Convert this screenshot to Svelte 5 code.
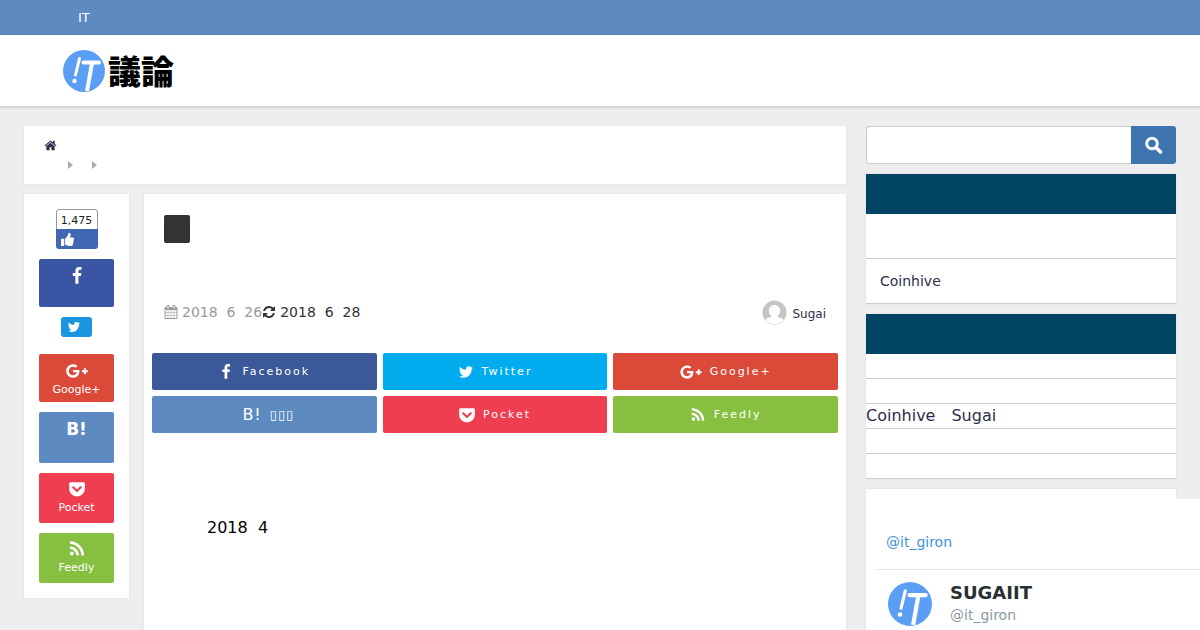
<script lang="ts">
	type Icon = { box: string; d: string };

	const icons: Record<string, Icon> = {
		facebook: {
			box: '0 0 1792 1792',
			d: 'M1343 12v264h-157q-86 0-116 36t-30 108v189h293l-39 296h-254v759h-306v-759h-255v-296h255v-218q0-186 104-288.500t277-102.500q147 0 228 12z'
		},
		twitter: {
			box: '0 0 1792 1792',
			d: 'M1684 408q-67 98-162 167 1 14 1 42 0 130-38 259.500t-115.500 248.500-184.500 210.500-258 146-323 54.500q-271 0-496-145 35 4 78 4 225 0 401-138-105-2-188-64.500t-114-159.500q33 5 61 5 43 0 85-11-112-23-185.500-111.500t-73.500-205.500v-4q68 38 146 41-66-44-105-115t-39-154q0-88 44-163 121 149 294.500 238.500t371.500 99.500q-8-38-8-74 0-134 94.500-228.500t228.500-94.500q140 0 236 102 109-21 205-78-37 115-142 178 93-10 186-50z'
		},
		google: {
			box: '0 0 640 512',
			d: 'M386.061 228.496c1.834 9.692 3.143 19.384 3.143 31.956C389.204 370.205 315.599 448 204.800 448c-106.084 0-192-85.915-192-192s85.916-192 192-192c51.864 0 95.083 18.859 128.611 50.292l-52.126 50.030c-14.145-13.621-39.028-29.599-76.485-29.599-65.484 0-118.920 54.221-118.920 121.277 0 67.056 53.436 121.277 118.920 121.277 75.961 0 104.513-54.745 108.965-82.773H204.800v-66.009h181.261zm185.406 6.437V179.200h-56.001v55.733h-55.733v56.001h55.733v55.733h56.001v-55.733H627.200v-56.001h-55.733z'
		},
		pocket: {
			box: '0 0 448 512',
			d: 'M407.600 64h-367C18.500 64 0 82.500 0 104.600v135.200C0 364.500 99.700 464 224.200 464c124 0 223.800-99.500 223.800-224.200V104.600c0-22.400-17.700-40.600-40.400-40.600zm-162 268.500c-12.400 11.800-31.400 11.100-42.400 0C89.500 223.600 88.300 227.400 88.300 209.300c0-16.900 13.800-30.700 30.700-30.700 17 0 16.100 3.800 105.200 89.300 90.600-86.900 88.600-89.300 105.500-89.300 16.900 0 30.700 13.800 30.700 30.700 0 17.800-2.900 15.700-114.800 123.200z'
		},
		feedly: {
			box: '0 0 1792 1792',
			d: 'M576 1344q0 80-56 136t-136 56-136-56-56-136 56-136 136-56 136 56 56 136zm512 123q2 28-17 48-18 21-47 21h-135q-25 0-43-16.500t-20-41.500q-22-229-184.500-391.500t-391.500-184.500q-25-2-41.500-20t-16.500-43v-135q0-29 21-47 17-17 43-17h5q160 13 306 80.500t259 181.500q114 113 181.500 259t80.500 306zm512 2q2 27-18 47-18 20-46 20h-143q-26 0-44.500-17.500t-19.500-42.500q-12-215-101-408.500t-231.500-336-336-231.500-408.500-102q-25-1-42.500-19.500t-17.500-43.500v-143q0-28 20-46 18-18 44-18h3q262 13 501.500 120t425.500 294q187 186 294 425.500t120 501.500z'
		},
		home: {
			box: '0 0 1792 1792',
			d: 'M1472 992v480q0 26-19 45t-45 19h-384v-384h-256v384h-384q-26 0-45-19t-19-45v-480q0-1 .5-3t.5-3l575-474 575 474q1 2 1 6zm223-69l-62 74q-8 9-21 11h-3q-13 0-21-7l-692-577-692 577q-12 8-24 7-13-2-21-11l-62-74q-8-10-7-23.500t11-21.500l719-599q32-26 76-26t76 26l244 204v-195q0-14 9-23t23-9h192q14 0 23 9t9 23v408l219 182q10 8 11 21.500t-7 23.500z'
		},
		refresh: {
			box: '0 0 1792 1792',
			d: 'M1639 1056q0 5-1 7-64 268-268 434.500t-478 166.500q-146 0-282.500-55t-243.500-157l-129 129q-19 19-45 19t-45-19-19-45v-448q0-26 19-45t45-19h448q26 0 45 19t19 45-19 45l-137 137q71 66 161 102t187 36q134 0 250-65t186-179q11-17 53-117 8-23 30-23h192q13 0 22.500 9.500t9.500 22.500zm25-800v448q0 26-19 45t-45 19h-448q-26 0-45-19t-19-45 19-45l138-138q-148-137-349-137-134 0-250 65t-186 179q-11 17-53 117-8 23-30 23h-199q-13 0-22.500-9.500t-9.500-22.500v-7q65-268 270-434.500t480-166.500q146 0 284 55.500t245 156.500l130-129q19-19 45-19t45 19 19 45z'
		},
		calendar: {
			box: '0 0 1792 1792',
			d: 'M192 1664h288v-288h-288v288zm352 0h320v-288h-320v288zm-352-352h288v-320h-288v320zm352 0h320v-320h-320v320zm-352-384h288v-288h-288v288zm736 736h320v-288h-320v288zm-384-736h320v-288h-320v288zm768 736h288v-288h-288v288zm-384-352h320v-320h-320v320zm-352-864v-288q0-13-9.500-22.500t-22.500-9.500h-64q-13 0-22.500 9.500t-9.500 22.500v288q0 13 9.500 22.500t22.500 9.500h64q13 0 22.500-9.500t9.500-22.500zm736 864h288v-320h-288v320zm-384-384h320v-288h-320v288zm384 0h288v-288h-288v288zm32-480v-288q0-13-9.500-22.500t-22.500-9.500h-64q-13 0-22.500 9.500t-9.500 22.500v288q0 13 9.500 22.500t22.500 9.500h64q13 0 22.500-9.500t9.500-22.500zm384-64v1280q0 52-38 90t-90 38h-1408q-52 0-90-38t-38-90v-1280q0-52 38-90t90-38h128v-96q0-66 47-113t113-47h64q66 0 113 47t47 113v96h384v-96q0-66 47-113t113-47h64q66 0 113 47t47 113v96h128q52 0 90 38t38 90z'
		},
		thumb: {
			box: '0 0 512 512',
			d: 'M104 224H24c-13.255 0-24 10.745-24 24v240c0 13.255 10.745 24 24 24h80c13.255 0 24-10.745 24-24V248c0-13.255-10.745-24-24-24zM384 81.452c0 42.416-25.970 66.208-33.277 94.548h101.723c33.397 0 59.397 27.746 59.553 58.098.084 17.938-7.546 37.249-19.439 49.197l-.11.11c9.836 23.337 8.237 56.037-9.308 79.469 8.681 25.895-.069 57.704-16.382 74.757 4.298 17.598 2.244 32.575-6.148 44.632C440.202 511.587 389.616 512 346.839 512l-2.845-.001c-48.287-.017-87.806-17.598-119.560-31.725-15.957-7.099-36.821-15.887-52.651-16.178-6.540-.120-11.783-5.457-11.783-11.998v-213.770c0-3.200 1.282-6.271 3.558-8.521 39.614-39.144 56.648-80.587 89.117-113.111 14.804-14.832 20.188-37.236 25.393-58.902C282.515 39.293 291.817 0 312 0c24 0 72 8 72 81.452z'
		}
	};

	const shares = [
		{ id: 'facebook', label: 'Facebook' },
		{ id: 'twitter', label: 'Twitter' },
		{ id: 'google', label: 'Google+' },
		{ id: 'hatena', label: '▯▯▯' },
		{ id: 'pocket', label: 'Pocket' },
		{ id: 'feedly', label: 'Feedly' }
	];

	const posts = ['', 'Coinhive'];
	const comments = [[], [], ['Coinhive', 'Sugai'], [], []];

	let query = $state('');
</script>

{#snippet icon(name: string)}
	<svg class="icon {name}-icon" viewBox={icons[name].box} aria-hidden="true">
		<path d={icons[name].d} />
	</svg>
{/snippet}

{#snippet mark()}
	<svg class="mark" viewBox="0 0 42 42" aria-hidden="true">
		<circle cx="21" cy="21" r="21" fill="#5b9ff5" />
		<g fill="none" stroke="#fff" stroke-linecap="round">
			<path d="M16.500 8.500 12.500 25" stroke-width="3" />
			<path d="M20.500 12.500H36" stroke-width="4" />
			<path d="M29 13 24 41" stroke-width="4" stroke-linecap="butt" />
		</g>
		<circle cx="11.500" cy="31" r="2.200" fill="#fff" />
	</svg>
{/snippet}

<div class="topbar"><p>IT</p></div>

<header>
	<a class="logo" href="/" aria-label="IT議論">
		{@render mark()}
		<span>議論</span>
	</a>
</header>

<div class="page">
	<main>
		<nav class="card crumbs">
			<a href="/" aria-label="Home">{@render icon('home')}</a>
			<div class="arrows"><i></i><i></i></div>
		</nav>

		<div class="columns">
			<div class="card side-share">
				<a class="like" href="/like">
					<span>1,475</span>
					<b>{@render icon('thumb')}</b>
				</a>
				<a class="tile fb-share" href="/share/facebook" aria-label="Facebook">{@render icon('facebook')}</a>
				<div class="tweet-wrap">
					<a class="tweet" href="/share/twitter" aria-label="Twitter">{@render icon('twitter')}</a>
				</div>
				<a class="tile google" href="/share/google">{@render icon('google')}<span>Google+</span></a>
				<a class="tile tall hatena" href="/share/hatena"><strong>B!</strong></a>
				<a class="tile tall pocket" href="/share/pocket">{@render icon('pocket')}<span>Pocket</span></a>
				<a class="tile tall feedly" href="/share/feedly">{@render icon('feedly')}<span>Feedly</span></a>
			</div>

			<article class="card">
				<div class="title"><span class="category"></span></div>
				<div class="meta">
					<time class="posted" datetime="2018-06-26">{@render icon('calendar')}2018&nbsp; 6&nbsp; 26</time>
					<time datetime="2018-06-28">{@render icon('refresh')}2018&nbsp; 6&nbsp; 28</time>
					<a class="author" href="/author/sugai">
						<svg viewBox="0 0 25 25" aria-hidden="true">
							<circle cx="12.500" cy="12.500" r="12" fill="#c5c5c5" />
							<path d="M12.500 5c3.400 0 5.700 2.500 5.700 5.700 0 2.200-1 4.200-2.500 5.300v1c2.500.6 5 1.300 6 2.900a12 12 0 0 1-18.400 0c1-1.600 3.500-2.300 6-2.900v-1c-1.500-1.100-2.500-3.100-2.500-5.300C6.800 7.500 9.100 5 12.500 5z" fill="#fff" />
						</svg>
						<span>Sugai</span>
					</a>
				</div>
				<div class="shares">
					{#each shares as s (s.id)}
						<a class={s.id} href="/share/{s.id}">
							{#if s.id === 'hatena'}
								<span class="b">B!</span>
							{:else}
								{@render icon(s.id)}
							{/if}
							<span class="label">{s.label}</span>
						</a>
					{/each}
				</div>
				<p class="body">2018&nbsp; 4</p>
			</article>
		</div>
	</main>

	<aside>
		<form class="search" onsubmit={(e) => e.preventDefault()}>
			<input type="search" aria-label="Search" bind:value={query} />
			<button aria-label="Search">
				<svg viewBox="0 0 18 18" fill="none" stroke="currentColor" stroke-width="3" aria-hidden="true">
					<circle cx="7" cy="7.500" r="5.300" />
					<path d="m11 11.500 4.500 4.500" stroke-width="3.500" stroke-linecap="round" />
				</svg>
			</button>
		</form>

		<section class="card widget">
			<h2></h2>
			<ul class="posts">
				{#each posts as post}
					<li><a href="/posts">{post}</a></li>
				{/each}
			</ul>
		</section>

		<section class="card widget">
			<h2></h2>
			<ul class="comments">
				{#each comments as parts}
					<li>
						{#each parts as part}<a href="/comments">{part}</a>{/each}
					</li>
				{/each}
			</ul>
		</section>

		<section class="card timeline-box">
			<div class="timeline">
				<div class="timeline-head"><a href="/it_giron">@it_giron</a></div>
				<div class="profile">
					{@render mark()}
					<div>
						<strong>SUGAIIT</strong>
						<span>@it_giron</span>
					</div>
				</div>
			</div>
		</section>
	</aside>
</div>

<style>
	:global(body) {
		background: #eee;
		color: #333;
		font-family: 'DejaVu Sans', 'Noto Sans CJK JP', sans-serif;
		font-size: 16px;
		overflow-x: hidden;
	}
	a {
		color: #2e2e4a;
		text-decoration: none;
	}
	h2,
	p,
	ul {
		margin: 0;
		padding: 0;
		list-style: none;
	}
	.icon {
		width: 16px;
		height: 16px;
		fill: currentColor;
		flex: none;
	}
	.topbar {
		background: #5d8ac1;
		color: #fff;
		font-size: 13px;
		line-height: 35px;
		padding: 0 78px;
	}
	header {
		background: #fff;
		box-shadow: 0 1px 3px rgba(0, 0, 0, 0.2);
		padding: 15px 63px 14px;
	}
	.logo {
		display: flex;
		align-items: center;
		gap: 3px;
		color: #000;
		font: 900 33px/40px 'Noto Sans CJK JP', sans-serif;
	}
	.logo span {
		padding-bottom: 2px;
	}
	.mark {
		width: 42px;
		height: 42px;
		flex: none;
	}
	.page {
		display: flex;
		align-items: flex-start;
		gap: 20px;
		padding: 20px 24px 0;
	}
	main {
		flex: 1;
		min-width: 0;
	}
	.card {
		background: #fff;
		box-shadow: 0 0 2px rgba(0, 0, 0, 0.08);
	}
	.crumbs {
		padding: 11px 20px 10px;
		margin-bottom: 10px;
	}
	.crumbs a {
		display: flex;
		align-items: center;
		height: 17px;
	}
	.home-icon {
		width: 13px;
		height: 13px;
	}
	.arrows {
		display: flex;
		align-items: center;
		gap: 19px;
		height: 20px;
		padding: 2px 0 0 24px;
		box-sizing: border-box;
	}
	.arrows i {
		border: 4px solid transparent;
		border-left: 5px solid #aaa;
		border-right: 0;
	}
	.columns {
		display: flex;
		align-items: flex-start;
		gap: 15px;
	}
	.side-share {
		display: flex;
		flex-direction: column;
		align-items: center;
		gap: 10px;
		width: 75px;
		padding: 15px;
	}
	.like {
		display: flex;
		flex-direction: column;
		width: 42px;
		height: 40px;
		border-radius: 3px;
		overflow: hidden;
		color: #222;
		font-size: 11px;
	}
	.like span {
		height: 19px;
		border: 1px solid #999;
		border-bottom: 0;
		border-radius: 3px 3px 0 0;
		line-height: 21px;
		text-align: center;
	}
	.like b {
		display: flex;
		flex: 1;
		align-items: center;
		padding-left: 5px;
		background: #4267b2;
		color: #fff;
	}
	.thumb-icon {
		width: 13px;
		height: 13px;
	}
	.tile {
		display: flex;
		flex-direction: column;
		align-items: center;
		box-sizing: border-box;
		width: 100%;
		height: 48px;
		padding-top: 8px;
		border-radius: 2px;
		color: #fff;
		font-size: 11px;
		line-height: 18px;
	}
	.tile.tall {
		height: 50px;
		padding-top: 7px;
	}
	.tile.hatena {
		height: 51px;
		padding-top: 8px;
	}
	.tile strong {
		font-size: 17px;
	}
	.tile .icon {
		width: 18px;
		height: 18px;
	}
	.tile span {
		line-height: 20px;
	}
	.tile .google-icon {
		width: 24px;
	}
	.fb-share {
		background: #3b55a5;
	}
	.tweet-wrap {
		height: 27px;
	}
	.tweet {
		display: flex;
		align-items: center;
		width: 25px;
		height: 20px;
		padding-left: 6px;
		border-radius: 3px;
		background: #1b95e0;
		color: #fff;
	}
	.tweet .icon {
		width: 14px;
		height: 14px;
	}
	.facebook {
		background: #3b5998;
	}
	.twitter {
		background: #00acee;
	}
	.google {
		background: #db4a39;
	}
	.hatena {
		background: #5d8ac1;
	}
	.pocket {
		background: #f03e51;
	}
	.feedly {
		background: #87c040;
	}
	article {
		flex: 1;
		min-width: 0;
	}
	.title {
		height: 85px;
		padding: 21px 20px 0;
	}
	.category {
		display: block;
		width: 26px;
		height: 28px;
		border-radius: 2px;
		background: #333;
	}
	.meta {
		display: flex;
		align-items: center;
		height: 24px;
		padding: 0 20px;
		font-size: 14px;
	}
	.meta time {
		display: flex;
		align-items: center;
		gap: 4px;
	}
	.meta .icon {
		width: 14px;
		height: 14px;
	}
	.posted {
		color: #999;
	}
	.author {
		display: flex;
		align-items: center;
		gap: 5px;
		margin-left: auto;
		font-size: 12px;
	}
	.author svg {
		width: 25px;
		height: 25px;
	}
	.author span {
		padding-top: 4px;
	}
	.shares {
		display: grid;
		grid-template-columns: repeat(3, 1fr);
		gap: 6px;
		padding: 29px 8px 0;
	}
	.shares a {
		display: flex;
		align-items: center;
		justify-content: center;
		gap: 8px;
		height: 37px;
		border-radius: 2px;
		color: #fff;
		font-size: 11px;
		letter-spacing: 2px;
	}
	.shares .icon {
		height: 18px;
	}
	.shares .google-icon {
		width: 22px;
	}
	.shares .hatena {
		box-sizing: border-box;
		padding-left: 8px;
		font-size: 13px;
		letter-spacing: 1px;
	}
	.shares .b {
		font-size: 16px;
	}
	.body {
		padding: 85px 63px 200px;
		color: #000;
		line-height: 20px;
	}
	aside {
		display: flex;
		flex-direction: column;
		gap: 10px;
		width: 310px;
	}
	.search {
		display: flex;
		height: 38px;
	}
	.search input {
		flex: 1;
		min-width: 0;
		box-sizing: border-box;
		padding: 0 10px;
		border: 1px solid #ccc;
		border-right: 0;
		border-radius: 3px 0 0 3px;
		background: #fff;
	}
	.search button {
		display: flex;
		align-items: center;
		justify-content: center;
		width: 45px;
		padding: 0;
		border: 0;
		border-radius: 0 3px 3px 0;
		background: #3e75b0;
		color: #fff;
	}
	.search svg {
		width: 18px;
		height: 18px;
	}
	.widget h2 {
		height: 40px;
		background: #004363;
	}
	.widget li {
		border-bottom: 1px solid #ccc;
	}
	.posts li {
		height: 44px;
		padding: 0 14px;
		font-size: 14px;
		line-height: 44px;
	}
	.comments li {
		display: flex;
		gap: 16px;
		height: 24px;
		line-height: 24px;
	}
	.timeline-box {
		padding: 10px;
	}
	.timeline {
		width: 340px;
		background: #fff;
	}
	.timeline-head {
		padding: 33px 10px 17px;
		border-bottom: 1px solid #e1e8ed;
		font-size: 14px;
		line-height: 20px;
	}
	.timeline-head a {
		color: #3b94d9;
	}
	.profile {
		display: flex;
		align-items: flex-start;
		gap: 18px;
		padding: 12px;
	}
	.profile .mark {
		width: 44px;
		height: 44px;
	}
	.profile strong,
	.profile span {
		display: block;
		line-height: 22px;
	}
	.profile strong {
		color: #292f33;
		font-size: 18px;
	}
	.profile span {
		color: #8899a6;
		font-size: 14px;
	}
</style>
